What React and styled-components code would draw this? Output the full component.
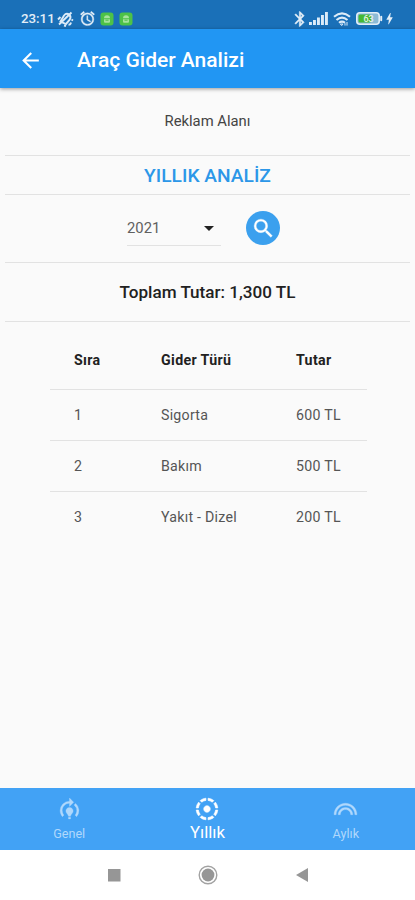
import styled, { createGlobalStyle } from "styled-components";
import {
  MdAlarm,
  MdArrowBack,
  MdArrowDropDown,
  MdBluetooth,
  MdBolt,
  MdFilterTiltShift,
  MdLooks,
  MdModelTraining,
  MdSearch,
} from "react-icons/md";

const expenses = [
  { id: 1, type: "Sigorta", amount: "600 TL" },
  { id: 2, type: "Bakım", amount: "500 TL" },
  { id: 3, type: "Yakıt - Dizel", amount: "200 TL" },
];

const tabs = [
  { label: "Genel", icon: MdModelTraining, size: 25 },
  { label: "Yıllık", icon: MdFilterTiltShift, size: 26, active: true },
  { label: "Aylık", icon: MdLooks, size: 25 },
];

const MutedBell = () => (
  <svg width="17" height="16" viewBox="0 0 17 16" fill="none" stroke="#dcebf8" strokeWidth="1.9">
    <path d="M3.5 10.5 L7 4.5 Q9.5 1.5 12.5 4 Q14.5 6 12.5 9 L9 13 Z" />
    <path d="M2 13.5 L14.5 1.5 M1 8.5 L3.5 6 M11.5 13.5 Q13.5 14 14 11.5 M14.5 8.5 L16 9.5 M7 14.5 L9 15" />
  </svg>
);

const AndroidBadge = () => (
  <svg width="14" height="14" viewBox="0 0 14 14">
    <rect x="0.5" y="0.5" width="13" height="13" rx="3" fill="#4dc247" />
    <path d="M4 6.2a3 3 0 0 1 6 0z M4 7.2h6v2.6a1 1 0 0 1-1 1H5a1 1 0 0 1-1-1z" fill="#a5e39c" />
    <path d="M5.5 8.2h3" stroke="#4dc247" />
  </svg>
);

const Signal = () => (
  <svg width="19" height="13" viewBox="0 0 19 13" fill="#dcebf8">
    <rect x="0" y="10" width="2.9" height="3" />
    <rect x="4" y="8" width="2.9" height="5" />
    <rect x="8" y="5.5" width="2.9" height="7.5" />
    <rect x="12" y="3" width="2.9" height="10" />
    <rect x="16" y="0" width="2.9" height="13" />
  </svg>
);

const Wifi = () => (
  <svg width="18" height="14" viewBox="0 0 18 14" fill="none" stroke="#dcebf8" strokeWidth="2.1">
    <path d="M1 4.8Q9-2 17 4.8" />
    <path d="M3.5 8Q9 3.4 14.5 8" />
    <path d="M6 10.8Q9 8.4 12 10.8" />
    <path d="M7.4 12h2.6L8.7 13.6z M12 11.2v2.4 M14 10v3.6" strokeWidth="1" />
  </svg>
);

const Battery = () => (
  <svg width="27" height="13" viewBox="0 0 27 13">
    <rect x="0.8" y="0.8" width="22.4" height="11.4" rx="3" fill="#8dbbd6" stroke="#e3eef7" strokeWidth="1.6" />
    <rect x="2.5" y="2.5" width="12.5" height="8" rx="1.5" fill="#45b934" />
    <rect x="24.2" y="3.7" width="2" height="5.6" rx="1" fill="#e3eef7" />
    <text x="12.5" y="9.7" textAnchor="middle" fontFamily="Roboto, sans-serif" fontSize="9" fontWeight="500" fill="#e6f3e4">
      63
    </text>
  </svg>
);

export default function App() {
  return (
    <Screen>
      <GlobalStyle />
      <StatusBar>
        <StatusLeft>
          <Clock>23:11</Clock>
          <MutedBell />
          <Alarm size={17} />
          <AndroidBadge />
          <AndroidBadge />
        </StatusLeft>
        <StatusRight>
          <Bluetooth size={18} />
          <Signal />
          <Wifi />
          <Battery />
          <Bolt size={15} />
        </StatusRight>
      </StatusBar>
      <AppBar>
        <MdArrowBack size={25} />
        <Title>Araç Gider Analizi</Title>
      </AppBar>

      <Content>
        <AdArea>Reklam Alanı</AdArea>
        <Heading>YILLIK ANALİZ</Heading>
        <Filter>
          <YearSelect>
            <span>2021</span>
            <MdArrowDropDown size={24} />
          </YearSelect>
          <SearchButton aria-label="Ara">
            <MdSearch size={25} />
          </SearchButton>
        </Filter>
        <Total>Toplam Tutar: 1,300 TL</Total>
        <Table>
          <HeadRow>
            <span>Sıra</span>
            <span>Gider Türü</span>
            <span>Tutar</span>
          </HeadRow>
          {expenses.map((item) => (
            <Row key={item.id}>
              <span>{item.id}</span>
              <span>{item.type}</span>
              <span>{item.amount}</span>
            </Row>
          ))}
        </Table>
      </Content>

      <BottomBar>
        {tabs.map(({ label, icon: Icon, size, active }) => (
          <Tab key={label} $active={active}>
            <TabIcon $active={active}>
              <Icon size={size} />
            </TabIcon>
            <TabLabel $active={active}>{label}</TabLabel>
          </Tab>
        ))}
      </BottomBar>
      <SystemNav>
        <svg width="14" height="14" viewBox="0 0 14 14">
          <rect x="1" y="1" width="12.5" height="12.5" fill="#969696" />
        </svg>
        <svg width="20" height="20" viewBox="0 0 20 20">
          <circle cx="10" cy="10" r="8.8" fill="none" stroke="#a2a2a2" strokeWidth="1.4" />
          <circle cx="10" cy="10" r="6.4" fill="#969696" />
        </svg>
        <svg width="14" height="16" viewBox="0 0 14 16">
          <path d="M1 8 L13 1 V15 Z" fill="#969696" />
        </svg>
      </SystemNav>
    </Screen>
  );
}

const GlobalStyle = createGlobalStyle`
  * {
    box-sizing: border-box;
  }
  body {
    margin: 0;
    font-family: Roboto, "Noto Sans", sans-serif;
  }
  svg {
    display: block;
    flex-shrink: 0;
  }
  /* the empty bounds of a material icon */
  path[fill="none"] {
    stroke: none;
  }
`;

const Screen = styled.div`
  width: 415px;
  height: 900px;
  display: flex;
  flex-direction: column;
  overflow: hidden;
  background: #fafafa;
`;

const StatusBar = styled.div`
  height: 29px;
  padding: 8px 18px 0 21px;
  display: flex;
  justify-content: space-between;
  background: #1a70b8;
  color: #e3eef7;
`;

const StatusLeft = styled.div`
  height: 21px;
  display: flex;
  align-items: center;
  gap: 5px;
`;

const StatusRight = styled.div`
  height: 21px;
  display: flex;
  align-items: center;
  gap: 5px;
`;

const Clock = styled.span`
  width: 34px;
  font-size: 13.3px;
  font-weight: 500;
  margin-right: -3px;
`;

const Alarm = styled(MdAlarm)`
  margin-right: -1px;
  stroke-width: 0.5px;
`;

const Bluetooth = styled(MdBluetooth)`
  margin-right: -5px;
  stroke-width: 0.5px;
`;

const Bolt = styled(MdBolt)`
  margin-left: -6px;
`;

const AppBar = styled.header`
  height: 59px;
  padding: 3px 18px 0;
  display: flex;
  align-items: center;
  flex-shrink: 0;
  background: #2196f3;
  color: #fff;
  box-shadow: 0 1px 4px rgba(0, 0, 0, 0.4);
`;

const Title = styled.h1`
  margin: 0 0 0 34px;
  font-size: 21px;
  font-weight: 500;
`;

const Content = styled.main`
  flex: 1;
  padding: 0 5px;
  color: #212121;
`;

const AdArea = styled.div`
  height: 68px;
  padding-bottom: 2px;
  display: grid;
  place-items: center;
  border-bottom: 1px solid #e2e2e2;
  color: #444;
  font-size: 14.8px;
`;

const Heading = styled.h2`
  height: 39px;
  margin: 0;
  display: grid;
  place-items: center;
  border-bottom: 1px solid #e2e2e2;
  color: #2c97e8;
  font-size: 19.2px;
  font-weight: 500;
`;

const Filter = styled.div`
  height: 68px;
  padding-left: 122px;
  display: flex;
  align-items: center;
  border-bottom: 1px solid #e2e2e2;
`;

const YearSelect = styled.div`
  width: 94px;
  height: 34px;
  display: flex;
  align-items: center;
  justify-content: space-between;
  border-bottom: 1px solid #e2e2e2;
  color: #606060;
  font-size: 14.8px;
  svg {
    color: #222;
  }
`;

const SearchButton = styled.button`
  width: 34px;
  height: 34px;
  margin: 0 0 1px 25px;
  padding: 0;
  display: grid;
  place-items: center;
  border: 0;
  border-radius: 50%;
  background: #3ba0ee;
  color: #fff;
  svg {
    stroke-width: 0.3px;
  }
`;

const Total = styled.div`
  height: 59px;
  display: grid;
  place-items: center;
  border-bottom: 1px solid #e2e2e2;
  font-size: 17.1px;
  font-weight: 500;
`;

const Table = styled.div`
  width: 317px;
  margin: 9px 0 0 45px;
`;

const Row = styled.div`
  height: 51px;
  padding-left: 24px;
  display: grid;
  grid-template-columns: 87px 135px 1fr;
  align-items: center;
  border-bottom: 1px solid #e2e2e2;
  color: #555;
  font-size: 14.2px;
  letter-spacing: 0.25px;
  &:last-child {
    border-bottom-color: transparent;
  }
`;

const HeadRow = styled(Row)`
  height: 59px;
  color: #212121;
  font-weight: 700;
  letter-spacing: 0.35px;
`;

const BottomBar = styled.nav`
  height: 62px;
  display: grid;
  grid-template-columns: repeat(3, 1fr);
  background: #42a2f5;
`;

const Tab = styled.div`
  padding-top: 8px;
  display: flex;
  flex-direction: column;
  align-items: center;
  color: ${(props) => (props.$active ? "#fff" : "#b0d8fc")};
`;

const TabIcon = styled.div`
  height: 26px;
  display: grid;
  place-items: center;
  svg {
    stroke-width: ${(props) => (props.$active ? "0.6px" : "0.3px")};
  }
`;

const TabLabel = styled.span`
  line-height: 20px;
  font-size: ${(props) => (props.$active ? "16.8px" : "12.6px")};
  padding-top: ${(props) => (props.$active ? "0" : "2px")};
`;

const SystemNav = styled.div`
  height: 50px;
  display: flex;
  align-items: center;
  justify-content: center;
  gap: 77px;
  background: #fff;
`;
